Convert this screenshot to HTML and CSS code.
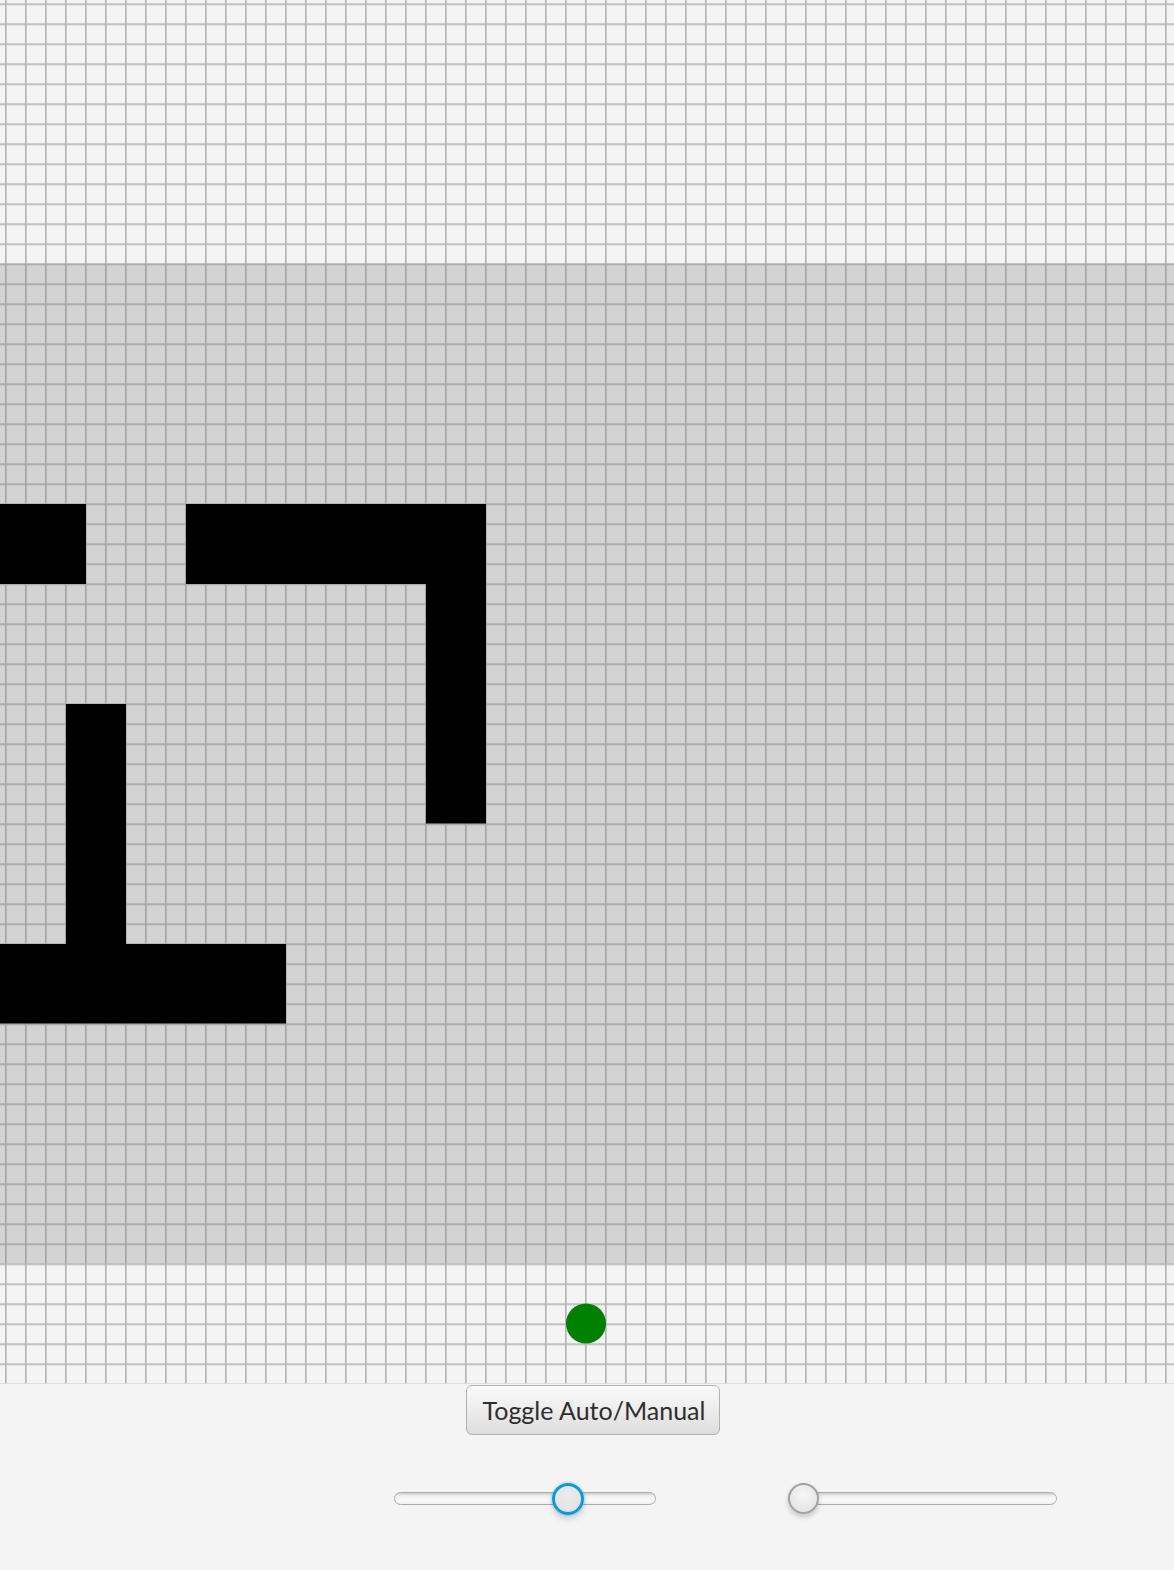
FILE: index.html
```html
<!DOCTYPE html>
<html>
<head>
<meta charset="utf-8">
<link rel="stylesheet" href="styles.css">
</head>
<body>
<div class="board">
  <svg class="canvas" width="1174" height="1384" viewBox="0 0 1174 1384" xmlns="http://www.w3.org/2000/svg">
    <defs>
      <pattern id="grid" patternUnits="userSpaceOnUse" x="5" y="3.4" width="20" height="20">
        <rect x="0" y="0" width="1.6" height="20" fill="rgba(118,118,118,0.52)"/>
        <rect x="1.6" y="0" width="18.4" height="1.6" fill="rgba(118,118,118,0.52)"/>
      </pattern>
    </defs>
    <rect x="0" y="0" width="1174" height="1384" fill="#f4f4f4"/>
    <rect x="0" y="263.5" width="1174" height="1000" fill="#d3d3d3"/>
    <rect x="0" y="0" width="1174" height="1383.5" fill="url(#grid)"/>
    <rect x="0" y="504" width="86" height="80" fill="#000"/>
    <rect x="186" y="504" width="300" height="80" fill="#000"/>
    <rect x="426" y="584" width="60" height="239.5" fill="#000"/>
    <rect x="66" y="704" width="60" height="240" fill="#000"/>
    <rect x="0" y="944" width="286" height="79.5" fill="#000"/>
    <circle cx="586" cy="1323.5" r="20" fill="#008000"/>
  </svg>
</div>
<div class="controls">
  <div class="button-row">
    <button class="toggle">Toggle Auto/Manual</button>
  </div>
  <div class="slider-row">
    <div class="slider slider-a">
      <div class="track"></div>
      <div class="thumb focused" style="left: 158px;"></div>
    </div>
    <div class="slider slider-b">
      <div class="track"></div>
      <div class="thumb" style="left: 0px;"></div>
    </div>
  </div>
</div>
</body>
</html>
```

FILE: styles.css
```css
html, body {
  margin: 0;
  padding: 0;
  background: #f4f4f4;
  width: 1174px;
  height: 1570px;
  overflow: hidden;
  font-family: Lato, "Open Sans", sans-serif;
}

.board {
  display: block;
  height: 1384px;
}

.canvas {
  display: block;
}

.controls {
  display: flex;
  flex-direction: column;
}

.button-row {
  display: flex;
  padding-left: 466px;
  padding-top: 1px;
}

.toggle {
  width: 254px;
  height: 50px;
  box-sizing: border-box;
  border: 1px solid #b1b1b1;
  border-radius: 6px;
  background: linear-gradient(#fafafa 0%, #eeeeee 45%, #dddddd 100%);
  box-shadow: inset 0 1px 0 #ffffff;
  color: #2e2e2e;
  font-family: Lato, "Open Sans", sans-serif;
  font-size: 25px;
  padding: 0 0 0 2px;
  margin: 0;
  line-height: 46px;
}

.slider-row {
  display: flex;
  padding-left: 394px;
  gap: 132px;
  margin-top: 47px;
}

.slider {
  position: relative;
  height: 34px;
}

.slider-a {
  width: 262px;
}

.slider-b {
  width: 269px;
}

.track {
  position: absolute;
  left: 0;
  right: 0;
  top: 10px;
  height: 13px;
  box-sizing: border-box;
  border: 1px solid #adadad;
  border-radius: 7px;
  background: linear-gradient(#cdcdcd 0%, #f2f2f2 30%, #fbfbfb 70%, #eeeeee 100%);
}

.thumb {
  position: absolute;
  top: 1px;
  width: 31px;
  height: 31px;
  box-sizing: border-box;
  border-radius: 50%;
  border: 2px solid #a2a2a2;
  background: radial-gradient(circle at 50% 35%, #f6f6f6 0%, #e6e6e6 70%, #dcdcdc 100%);
  box-shadow: 0 3px 5px rgba(0, 0, 0, 0.18);
}

.thumb.focused {
  border: 3px solid #0a9bd6;
  width: 32px;
  height: 32px;
  top: 1px;
  background: radial-gradient(circle at 50% 40%, #ececec 0%, #e4e4e4 65%, #cfe3ec 85%, #bcdcea 100%);
  box-shadow: 0 0 2px 1px rgba(10, 155, 214, 0.25), 0 4px 6px rgba(0, 0, 0, 0.15);
}
```
